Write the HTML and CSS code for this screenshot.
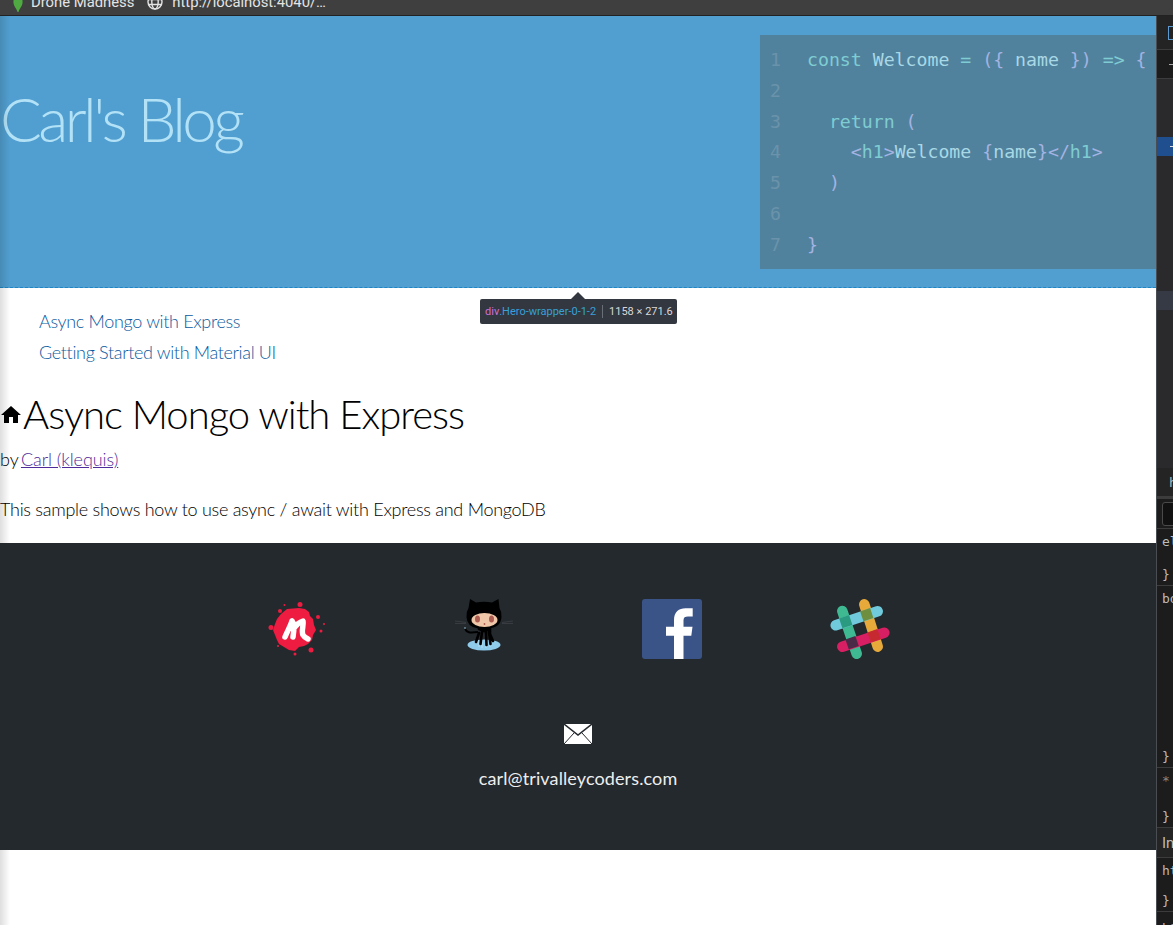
FILE: index.html
```html
<!DOCTYPE html>
<html lang="en">
<head>
  <meta charset="UTF-8">
  <meta name="viewport" content="width=device-width, initial-scale=1.0">
  <title>Carl's Blog</title>
  <link rel="stylesheet" href="styles.css">
</head>
<body>
  <div class="tab-bar">
    <div class="tab-row">
      <svg class="leaf" width="10" height="20" viewBox="0 0 10 20"><path d="M5 0C8 4 10 7 9.500 11 9 15 6.500 16 5.500 20H4.500C3.500 16 1 15 .5 11 0 7 2 4 5 0z" fill="#4faa41"/></svg>
      <span class="tab-title">Drone Madness</span>
      <svg class="globe" width="16" height="16" viewBox="0 0 16 16" fill="none" stroke="#e4e4e4" stroke-width="1.400"><circle cx="8" cy="8" r="7"/><ellipse cx="8" cy="8" rx="3.200" ry="7"/><path d="M1 5.500h14M1 10.500h14"/></svg>
      <span class="tab-url">http://localhost:4040/…</span>
    </div>
  </div>

  <div class="window">
    <div class="page">
      <div class="page-shadow"></div>

      <header class="hero">
        <h1 class="hero-title">Carl's Blog</h1>
        <div class="code-box">
          <div class="code-line"><span class="num">1</span><code><span class="kw">const</span> <span class="id">Welcome</span> <span class="kw">=</span> <span class="pn">({</span> <span class="id">name</span> <span class="pn">})</span> <span class="kw">=&gt;</span> <span class="pn">{</span></code></div>
          <div class="code-line"><span class="num">2</span><code></code></div>
          <div class="code-line"><span class="num">3</span><code>  <span class="kw">return</span> <span class="pn">(</span></code></div>
          <div class="code-line"><span class="num">4</span><code>    <span class="pn">&lt;</span><span class="kw">h1</span><span class="pn">&gt;</span><span class="id">Welcome</span> <span class="pn">{</span><span class="id">name</span><span class="pn">}&lt;/</span><span class="kw">h1</span><span class="pn">&gt;</span></code></div>
          <div class="code-line"><span class="num">5</span><code>  <span class="pn">)</span></code></div>
          <div class="code-line"><span class="num">6</span><code></code></div>
          <div class="code-line"><span class="num">7</span><code><span class="pn">}</span></code></div>
        </div>
      </header>

      <div class="inspect-tip">
        <span class="tip-tag">div</span><span class="tip-class">.Hero-wrapper-0-1-2</span><span class="tip-size">1158 × 271.6</span>
      </div>

      <ul class="post-nav">
        <li><a href="#">Async Mongo with Express</a></li>
        <li><a href="#">Getting Started with Material UI</a></li>
      </ul>

      <main class="post">
        <h1 class="post-title">
          <svg width="24" height="24" viewBox="0 0 24 24"><path d="M10 20v-6h4v6h5v-8h3L12 3 2 12h3v8z"/></svg>
          Async Mongo with Express
        </h1>
        <p class="byline">by <a href="#">Carl (klequis)</a></p>
        <p class="post-body">This sample shows how to use async / await with Express and MongoDB</p>
      </main>

      <footer class="footer">
        <div class="social">
          <!-- meetup -->
          <svg width="60" height="60" viewBox="0 0 60 60">
            <g fill="#ed1c40">
              <path d="M21 10 27 9.500 33 9 39 10 43 13 44 17 47 20 48 26 50 31 47 36 46 41 42 45 38 47 33 48 29 52 23 51 18 48 13 45 11 41 9 36 7 31 9 25 11 20 15 15z"/>
              <circle cx="18.500" cy="6" r="1"/><circle cx="34" cy="5.500" r="2.500"/><circle cx="14" cy="12" r="2"/><circle cx="52" cy="18" r="2"/><circle cx="5" cy="28.500" r="2.500"/><circle cx="58" cy="25" r="1"/><circle cx="55" cy="32" r="1.500"/><circle cx="12" cy="47" r="1"/><circle cx="45" cy="51" r="2.500"/><circle cx="29" cy="55" r="1.500"/>
            </g>
            <path d="M26 22C24 28 21 33 19 38M26 22C29 25 28 32 27 38M29 28C31 25 34 23 37 22 38 26 35 32 37 36 38 38 40 39 42 40" fill="none" stroke="#fff" stroke-width="5.500" stroke-linecap="round" stroke-linejoin="round"/>
          </svg>
          <!-- github -->
          <svg width="60" height="60" viewBox="0 0 60 60">
            <g transform="translate(1 0)">
              <ellipse cx="29" cy="46" rx="16.500" ry="5.500" fill="#8fcbea"/>
              <path d="M24 41v7M27 41v8M31 41v8M35 41v7" stroke="#a9d8f0" stroke-width="1.500"/>
              <path d="M0 22 11 23.500M0 24.500 11 24.500M47 23.500 58 22M47 24.500 58 24.500" stroke="#3d4146" stroke-width=".8"/>
              <path d="M15 0 21 3.500Q29 2 37 3.500L43.500 0 44.500 9Q47 13 46.500 18 46 28 34 29.500V31L23 31V29.500Q12 28 11.500 18 11 13 13.500 9z" fill="#000"/>
              <ellipse cx="29.500" cy="21" rx="13" ry="7" fill="#f0c7a8"/>
              <ellipse cx="22.500" cy="20" rx="2.500" ry="3.500" fill="#ad5c51"/><ellipse cx="36.500" cy="20" rx="2.500" ry="3.500" fill="#ad5c51"/>
              <circle cx="29.500" cy="25" r=".9" fill="#ad5c51"/>
              <path d="M24 30 29.500 32 35 30V35L38 42M24 34 21 43M27 33 25.500 45M31 33 31.500 46M34 33 35.500 45" fill="none" stroke="#000" stroke-width="2.600" stroke-linecap="round"/>
              <path d="M10 29C11 34 15 34 23 33" fill="none" stroke="#000" stroke-width="1.800"/>
              <circle cx="10" cy="29" r="1" fill="#6d8a9c"/>
            </g>
          </svg>
          <!-- facebook -->
          <svg width="60" height="60" viewBox="0 0 60 60">
            <rect width="60" height="60" rx="3" fill="#3b5488"/>
            <path d="M32 60V36.700H24V27.700H32V21C32 13 37 9.300 43.500 9.300H50.700V17.600H46C43 17.600 41.500 18.500 41.500 21.500V27.700H50.500L49.300 36.700H41.500V60z" fill="#fff"/>
          </svg>
          <!-- slack -->
          <svg width="60" height="60" viewBox="0 0 60 60" fill="none" stroke-width="10.500" stroke-linecap="round">
            <path d="M12.300 12 26.700 54.700" stroke="#3eb991"/>
            <path d="M34.300 5.300 47.700 47.700" stroke="#e6a93a"/>
            <path d="M5.700 26.300 47.700 12.300" stroke="#70cadb"/>
            <path d="M12.300 47.700 54.300 33.700" stroke="#d81f63"/>
            <rect x="10.500" y="17.500" width="10.500" height="10.500" fill="#2a9a80" transform="rotate(-18.400 15.700 22.700)"/>
            <rect x="31.500" y="10.500" width="10.500" height="10.500" fill="#6d8f3f" transform="rotate(-18.400 36.700 15.700)"/>
            <rect x="16.800" y="38.500" width="10.500" height="10.500" fill="#4a2a47" transform="rotate(-18.400 22 43.700)"/>
            <rect x="38.800" y="31.500" width="10.500" height="10.500" fill="#c72930" transform="rotate(-18.400 44 36.700)"/>
          </svg>
        </div>
        <div class="contact">
          <svg width="28" height="20" viewBox="0 0 28 20">
            <rect width="28" height="20" fill="#fff"/>
            <path d="M0 0 14 11 28 0" fill="none" stroke="#24292e" stroke-width="1.500"/>
            <path d="M0 20 10 9M28 20 18 9" stroke="#24292e" stroke-width="1"/>
          </svg>
          <span class="email">carl@trivalleycoders.com</span>
        </div>
      </footer>
    </div>

    <aside class="devtools">
      <div class="dt-tabs"><span class="dt-box"></span></div>
      <div class="dt-toolbar"><span class="dt-dash"></span></div>
      <div class="dt-tree">
        <div class="dt-selected"><span class="dt-dash dt-dash-light"></span></div>
        <div class="dt-hover"></div>
      </div>
      <div class="dt-pane-head"><span class="dt-code">h</span></div>
      <div class="dt-filter"><span class="dt-input"></span></div>
      <div class="dt-rule dt-rule-element"><span class="dt-code">element.style {</span><span class="dt-code dt-close">}</span></div>
      <div class="dt-rule dt-rule-body"><span class="dt-code">body {</span><span class="dt-code dt-close">}</span></div>
      <div class="dt-rule dt-rule-star"><span class="dt-code dt-star">* {</span><span class="dt-code dt-close">}</span></div>
      <div class="dt-inherit"><span class="dt-code dt-sans">Inherited</span></div>
      <div class="dt-rule dt-rule-html"><span class="dt-code">html {</span><span class="dt-code dt-close">}</span></div>
      <div class="dt-rule dt-rule-last"><span class="dt-code">h1 {</span></div>
    </aside>
  </div>
</body>
</html>
```

FILE: styles.css
```css
* {
  box-sizing: border-box;
}

html,
body {
  height: 100%;
}

body {
  margin: 0;
  overflow: hidden;
  display: flex;
  flex-direction: column;
  background-color: white;
  font-family: Lato, "Open Sans", sans-serif;
  font-weight: 300;
  font-size: 18px;
  color: #000;
}

/* browser tab strip */
.tab-bar {
  height: 16px;
  flex-shrink: 0;
  overflow: hidden;
  background-color: #3f3f3f;
  border-bottom: 1px solid #222;
}

.tab-row {
  display: flex;
  align-items: center;
  height: 20px;
  margin-top: -8px;
  font-family: Roboto, sans-serif;
  font-weight: 400;
  font-size: 14.8px;
  color: #e4e4e4;
}

.leaf {
  margin-left: 13px;
}

.tab-title {
  margin-left: 8px;
}

.globe {
  margin-left: 13px;
}

.tab-url {
  margin-left: 9px;
}

.window {
  flex: 1;
  display: flex;
  min-height: 0;
}

.page {
  position: relative;
  flex: 1;
  min-width: 0;
}

.page-shadow {
  position: absolute;
  top: 0;
  left: 0;
  bottom: 0;
  width: 10px;
  background: linear-gradient(to right, rgba(0, 0, 0, 0.13), rgba(0, 0, 0, 0));
}

/* hero */
.hero {
  display: flex;
  justify-content: space-between;
  align-items: flex-start;
  height: 272px;
  padding-top: 19px;
  background-color: #519fd0;
  border-bottom: 1px dashed #1f86c6;
}

.hero-title {
  margin: 46px 0 0;
  font-size: 62px;
  font-weight: 300;
  color: #b3e2f7;
  letter-spacing: -3.600px;
}

.code-box {
  width: 396px;
  height: 234px;
  padding-top: 10px;
  overflow: hidden;
  background-color: #51829d;
  font-family: "DejaVu Sans Mono", monospace;
  font-size: 18.2px;
  font-weight: 400;
}

.code-line {
  display: flex;
  height: 30.75px;
  line-height: 30.75px;
}

.code-line .num {
  width: 47px;
  padding-left: 10px;
  flex-shrink: 0;
  color: #6a93ab;
}

.code-line code {
  font: inherit;
  white-space: pre;
}

.kw {
  color: #7fcdd3;
}

.id {
  color: #a8d8e6;
}

.pn {
  color: #a3b3e2;
}

/* devtools element tooltip */
.inspect-tip {
  position: absolute;
  top: 283px;
  left: 480px;
  display: flex;
  align-items: center;
  width: 197px;
  height: 25px;
  padding-left: 5px;
  background-color: #333740;
  border-radius: 2px;
  font-family: Roboto, sans-serif;
  font-weight: 400;
  font-size: 11px;
  white-space: nowrap;
}

.inspect-tip::before {
  content: "";
  position: absolute;
  top: -7px;
  left: 91px;
  border-left: 7px solid transparent;
  border-right: 7px solid transparent;
  border-bottom: 7px solid #333740;
}

.tip-tag {
  color: #d06fd6;
}

.tip-class {
  color: #37a0d8;
}

.tip-size {
  margin-left: 6px;
  padding-left: 6px;
  border-left: 1px solid #6a6e76;
  color: #d9d9d9;
}

/* post links */
.post-nav {
  margin: 0;
  padding: 18px 0 0 39px;
  list-style: none;
  letter-spacing: -0.34px;
}

.post-nav li {
  height: 31px;
  line-height: 31px;
}

.post-nav a {
  color: #0b5aa0;
  text-decoration: none;
}

.post {
  padding-top: 21px;
}

.post-title {
  display: flex;
  align-items: center;
  margin: 0;
  font-size: 40px;
  font-weight: 300;
  line-height: 50px;
  letter-spacing: -1px;
}

.post-title svg {
  flex-shrink: 0;
  margin-left: -1px;
  margin-top: 2px;
}

.byline {
  margin: 8px 0 0;
  line-height: 24px;
  letter-spacing: -0.08px;
}

.byline a {
  margin-left: -2px;
  color: #4f2a9a;
}

.post-body {
  margin: 26px 0 0;
  line-height: 24px;
  letter-spacing: -0.27px;
}

/* footer */
.footer {
  position: absolute;
  top: 527px;
  left: 0;
  right: 0;
  height: 307px;
  background-color: #24292e;
}

.social {
  display: flex;
  justify-content: center;
  gap: 128px;
  padding-top: 56px;
}

.contact {
  display: flex;
  flex-direction: column;
  align-items: center;
  padding-top: 65px;
}

.email {
  margin-top: 23px;
  color: #eee;
  font-weight: 400;
  letter-spacing: 0.12px;
}

/* devtools strip on the right */
.devtools {
  width: 17px;
  flex-shrink: 0;
  overflow: hidden;
  display: flex;
  flex-direction: column;
  background-color: #1c1c1d;
  border-left: 1px solid #4a4d52;
}

.dt-tabs {
  height: 34px;
  flex-shrink: 0;
  padding: 10px 0 0 11px;
  background-color: #242424;
  border-bottom: 1px solid #3c3c3c;
}

.dt-box {
  display: block;
  width: 8px;
  height: 14px;
  border: 1px solid #5d9ad1;
}

.dt-toolbar {
  display: flex;
  align-items: center;
  height: 29px;
  flex-shrink: 0;
  padding-left: 12px;
  background-color: #1c1c1d;
  border-bottom: 1px solid #3c3c3c;
}

.dt-dash {
  width: 8px;
  height: 1px;
  background-color: #aaa;
}

.dt-dash-light {
  display: block;
  background-color: #ddd;
}

.dt-tree {
  height: 389px;
  flex-shrink: 0;
  padding-top: 58px;
  background-color: #2a2a2d;
}

.dt-selected {
  display: flex;
  align-items: center;
  height: 19px;
  padding-left: 13px;
  background-color: #1f4f8f;
}

.dt-hover {
  height: 19px;
  margin-top: 135px;
  background-color: #363a45;
}

.dt-pane-head {
  height: 31px;
  flex-shrink: 0;
  padding: 7px 0 0 12px;
  background-color: #242424;
  border-bottom: 3px solid #3c3c3c;
}

.dt-filter {
  height: 30px;
  flex-shrink: 0;
  padding: 3px 0 3px 5px;
  border-bottom: 1px solid #3c3c3c;
}

.dt-input {
  display: block;
  height: 24px;
  margin-right: -8px;
  border: 1px solid #4a4a4a;
  border-radius: 3px;
  background-color: #111;
}

.dt-code {
  display: block;
  font-family: "DejaVu Sans Mono", monospace;
  font-weight: 400;
  font-size: 13px;
  line-height: 16px;
  color: #bbb;
  white-space: nowrap;
}

.dt-sans {
  font-family: Roboto, sans-serif;
  font-size: 15px;
}

.dt-rule {
  position: relative;
  flex-shrink: 0;
  padding: 5px 0 0 5px;
  border-bottom: 1px solid #3c3c3c;
}

.dt-close {
  position: absolute;
  left: 5px;
  bottom: 2px;
}

.dt-star {
  color: #888;
}

.dt-rule-element {
  height: 57px;
}

.dt-rule-body {
  height: 182px;
}

.dt-rule-star {
  height: 60px;
}

.dt-rule-html {
  height: 54px;
}

.dt-rule-last {
  padding-top: 9px;
}

.dt-inherit {
  height: 30px;
  flex-shrink: 0;
  padding: 7px 0 0 5px;
  background-color: #242424;
  border-bottom: 1px solid #3c3c3c;
}
```
